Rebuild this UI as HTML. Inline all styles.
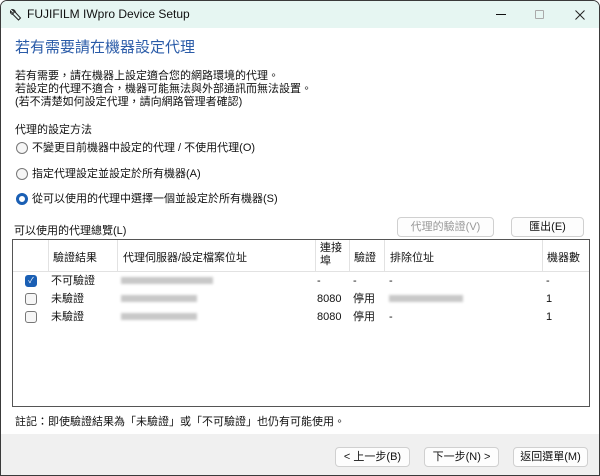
<!DOCTYPE html><html><head><meta charset="utf-8"><style>
*{margin:0;padding:0;box-sizing:border-box}
body{width:600px;height:476px;overflow:hidden;background:#fff;font-family:"Liberation Sans","Noto Sans CJK TC",sans-serif;font-size:11px;color:#111;position:relative}
.a{position:absolute;white-space:nowrap;line-height:14px}
.win{position:absolute;left:0;top:0;width:600px;height:476px;border:1px solid #3a3a3a;border-radius:7px 7px 0 0;overflow:hidden}
.tb{position:absolute;left:0;top:0;width:600px;height:27px;background:#e6f6f2}
.btn{position:absolute;border:1px solid #d0d0d0;border-radius:4px;background:#fdfdfd;text-align:center;font-size:11px;line-height:18px}
.rad{position:absolute;width:12px;height:12px;border:1px solid #777;border-radius:50%;background:#f6f6f6}
.cb{position:absolute;width:12px;height:12px;border:1px solid #777;border-radius:3px;background:#f6f6f6}
.blur{position:absolute;height:7px;background:#c8c8c8;filter:blur(1.2px)}
.sep{position:absolute;top:239px;width:1px;height:31px;background:#e2e2e2}
</style></head><body>
<div class="win">
<div class="tb"></div>
<svg class="a" style="left:8px;top:7px" width="13" height="13" viewBox="0 0 13 13"><path d="M3 1.5 L5.5 4 L4 5.5 L1.5 3 Q1 6 4 6.5 L9.5 12 L11.5 10 L6.5 4.5 Q6 1.5 3 1.5Z" fill="none" stroke="#222" stroke-width="1"/></svg>
<div class="a" style="left:26px;top:6px;font-size:12px">FUJIFILM IWpro Device Setup</div>
<div class="a" style="left:495px;top:13px;width:10px;height:1px;background:#111"></div>
<div class="a" style="left:534px;top:9px;width:9px;height:9px;border:1px solid #aaa;border-radius:1px"></div>
<svg class="a" style="left:574px;top:9px" width="10" height="10" viewBox="0 0 10 10"><path d="M0.5 0.5L9.5 9.5M9.5 0.5L0.5 9.5" stroke="#222" stroke-width="1"/></svg>
<div class="a" style="left:14px;top:38px;font-size:15px;line-height:18px;color:#2a5ba8">若有需要請在機器設定代理</div>
<div class="a" style="left:14px;top:69px;line-height:13px">若有需要，請在機器上設定適合您的網路環境的代理。<br>若設定的代理不適合，機器可能無法與外部通訊而無法設置。<br>(若不清楚如何設定代理，請向網路管理者確認)</div>
<div class="a" style="left:14px;top:122px">代理的設定方法</div>
<div class="rad" style="left:15px;top:141px"></div><div class="a" style="left:31px;top:140px">不變更目前機器中設定的代理 / 不使用代理(O)</div>
<div class="rad" style="left:15px;top:167px"></div><div class="a" style="left:31px;top:166px">指定代理設定並設定於所有機器(A)</div>
<div class="rad" style="left:15px;top:192px;border:3.5px solid #1a5fb4;background:#fff"></div><div class="a" style="left:31px;top:191px">從可以使用的代理中選擇一個並設定於所有機器(S)</div>
<div class="btn" style="left:396px;top:216px;width:97px;height:20px;color:#999">代理的驗證(V)</div>
<div class="btn" style="left:510px;top:216px;width:73px;height:20px">匯出(E)</div>
<div class="a" style="left:13px;top:223px">可以使用的代理總覽(L)</div>
<div class="a" style="left:11px;top:238px;width:578px;height:168px;border:1px solid #555"></div>
<div class="a" style="left:12px;top:270px;width:576px;height:1px;background:#e2e2e2"></div>
<div class="sep" style="left:47px"></div><div class="sep" style="left:116px"></div><div class="sep" style="left:314px"></div><div class="sep" style="left:348px"></div><div class="sep" style="left:383px"></div><div class="sep" style="left:541px"></div>
<div class="a" style="left:52px;top:250px">驗證結果</div>
<div class="a" style="left:122px;top:250px">代理伺服器/設定檔案位址</div>
<div class="a" style="left:319px;top:241px;line-height:13px">連接<br>埠</div>
<div class="a" style="left:353px;top:250px">驗證</div>
<div class="a" style="left:389px;top:250px">排除位址</div>
<div class="a" style="left:546px;top:250px">機器數</div>
<div class="cb" style="left:24px;top:274px;background:#1a5fb4;border-color:#1a5fb4;color:#fff;font-size:8px;line-height:10px;text-align:center">✓</div>
<div class="a" style="left:50px;top:273px">不可驗證</div><div class="blur" style="left:120px;top:276px;width:92px"></div>
<div class="a" style="left:316px;top:273px">-</div><div class="a" style="left:352px;top:273px">-</div><div class="a" style="left:388px;top:273px">-</div><div class="a" style="left:545px;top:273px">-</div>
<div class="cb" style="left:24px;top:292px"></div>
<div class="a" style="left:50px;top:291px">未驗證</div><div class="blur" style="left:120px;top:294px;width:76px"></div>
<div class="a" style="left:316px;top:291px">8080</div><div class="a" style="left:352px;top:291px">停用</div><div class="blur" style="left:388px;top:294px;width:74px"></div><div class="a" style="left:545px;top:291px">1</div>
<div class="cb" style="left:24px;top:310px"></div>
<div class="a" style="left:50px;top:309px">未驗證</div><div class="blur" style="left:120px;top:312px;width:76px"></div>
<div class="a" style="left:316px;top:309px">8080</div><div class="a" style="left:352px;top:309px">停用</div><div class="a" style="left:388px;top:309px">-</div><div class="a" style="left:545px;top:309px">1</div>
<div class="a" style="left:14px;top:414px">註記：即使驗證結果為「未驗證」或「不可驗證」也仍有可能使用。</div>
<div class="a" style="left:0;top:433px;width:600px;height:43px;background:#f0f0f0"></div>
<div class="btn" style="left:334px;top:446px;width:75px;height:20px">&lt; 上一步(B)</div>
<div class="btn" style="left:423px;top:446px;width:75px;height:20px">下一步(N) &gt;</div>
<div class="btn" style="left:512px;top:446px;width:75px;height:20px">返回選單(M)</div>
</div>
</body></html>
